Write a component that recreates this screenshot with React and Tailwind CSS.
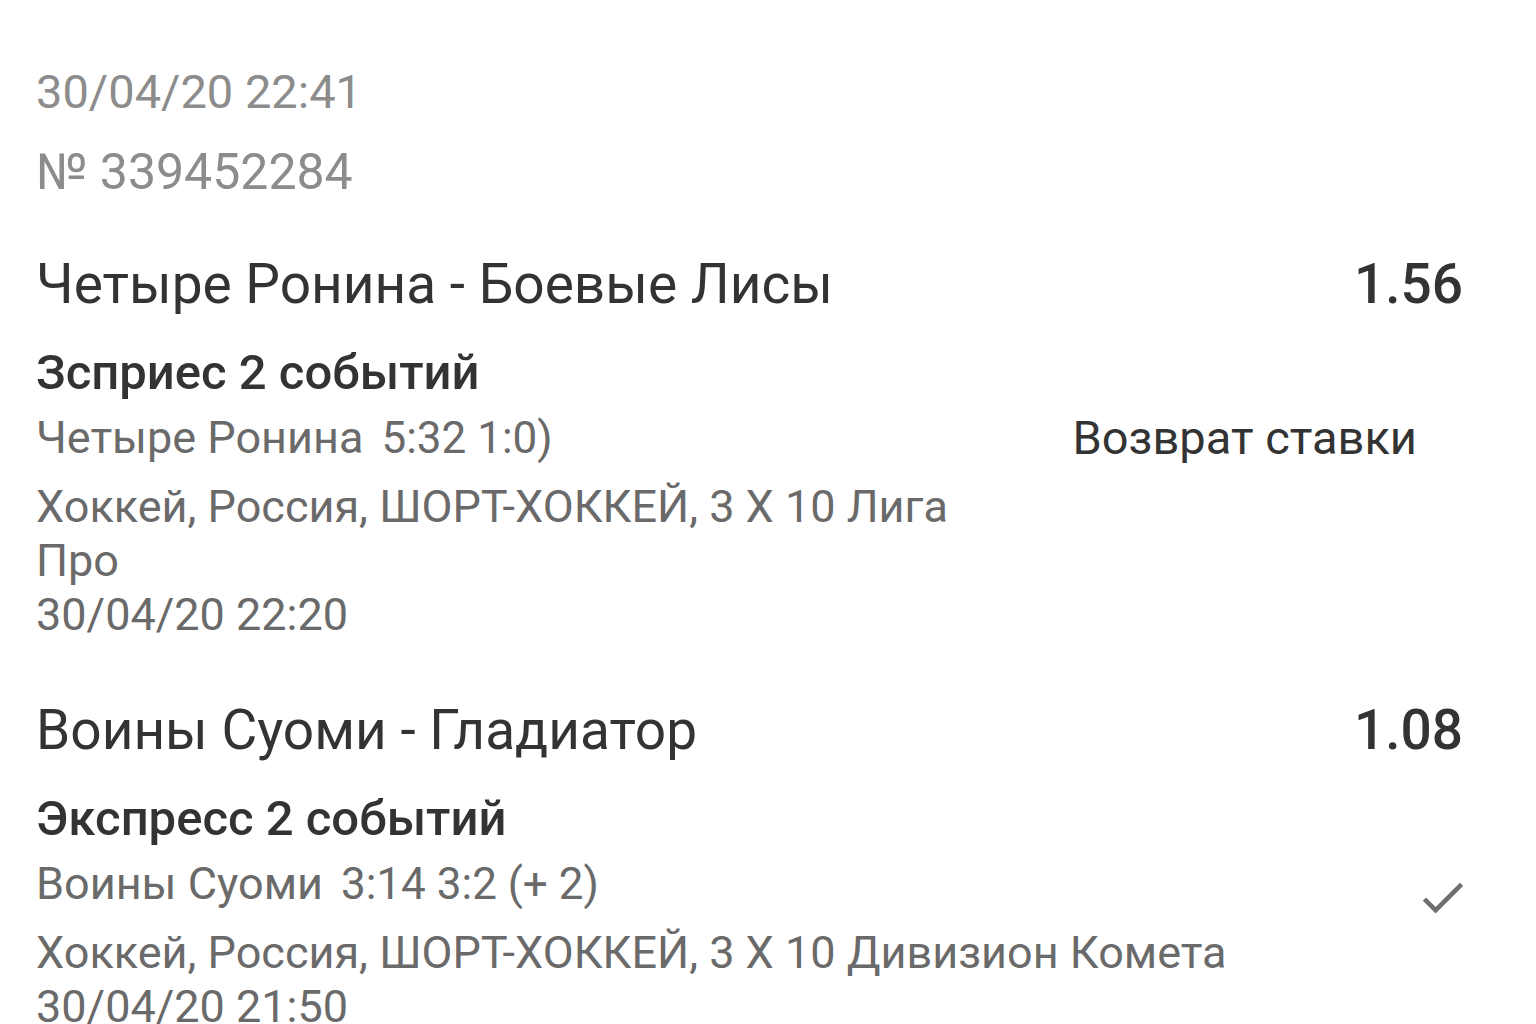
import React from 'react';

const font = { fontFamily: 'Roboto, "Noto Sans", sans-serif' };

function CheckIcon() {
  return (
    <svg viewBox="0 0 24 24" className="w-[55px] h-[55px] fill-[#6e6e6e]">
      <path d="M9 16.17L4.83 12l-1.42 1.41L9 19 21 7l-1.41-1.41z" />
    </svg>
  );
}

function BetBlock({ title, odds, kind, team, score, status, league, date, titleTop, leagueWidth }) {
  return (
    <div className={titleTop}>
      <div className="flex justify-between items-center leading-[80px] mb-[17px]">
        <span className="text-[55px] text-[#333]">{title}</span>
        <span className="text-[55px] font-medium text-[#333]">{odds}</span>
      </div>
      <div className="text-[49px] font-medium text-[#333] leading-[64px]">{kind}</div>
      <div className="flex justify-between items-center h-[66px] leading-[66px]">
        <span className="text-[45px] text-[#6a6a6a]">
          {team}
          <span className="ml-[18px] text-[44px]">{score}</span>
        </span>
        {status}
      </div>
      <div className={`mt-[9px] ${leagueWidth} text-[45px] text-[#6a6a6a] leading-[54px]`}>{league}</div>
      <div className="text-[45px] text-[#6a6a6a] leading-[54px]">{date}</div>
    </div>
  );
}

export default function App() {
  return (
    <div className="min-h-[1024px] bg-white pl-[36px] pr-[73px] pt-[52px]" style={font}>
      <div className="text-[47px] text-[#8c8c8c] leading-[80px]">30/04/20 22:41</div>
      <div className="text-[50px] text-[#8c8c8c] leading-[80px]">№ 339452284</div>
      <BetBlock
        titleTop="mt-[32px]"
        title="Четыре Ронина - Боевые Лисы"
        odds="1.56"
        kind="Зсприес 2 событий"
        team="Четыре Ронина"
        score="5:32 1:0)"
        status={<span className="mr-[46px] text-[47px] text-[#333]">Возврат ставки</span>}
        league="Хоккей, Россия, ШОРТ-ХОККЕЙ, 3 X 10 Лига Про"
        leagueWidth="w-[960px]"
        date="30/04/20 22:20"
      />
      <BetBlock
        titleTop="mt-[48px]"
        title="Воины Суоми - Гладиатор"
        odds="1.08"
        kind="Экспресс 2 событий"
        team="Воины Суоми"
        score="3:14 3:2 (+ 2)"
        status={<span className="relative top-[13px] mr-[-7px] leading-none"><CheckIcon /></span>}
        league="Хоккей, Россия, ШОРТ-ХОККЕЙ, 3 X 10 Дивизион Комета"
        leagueWidth="w-[1250px]"
        date="30/04/20 21:50"
      />
    </div>
  );
}
